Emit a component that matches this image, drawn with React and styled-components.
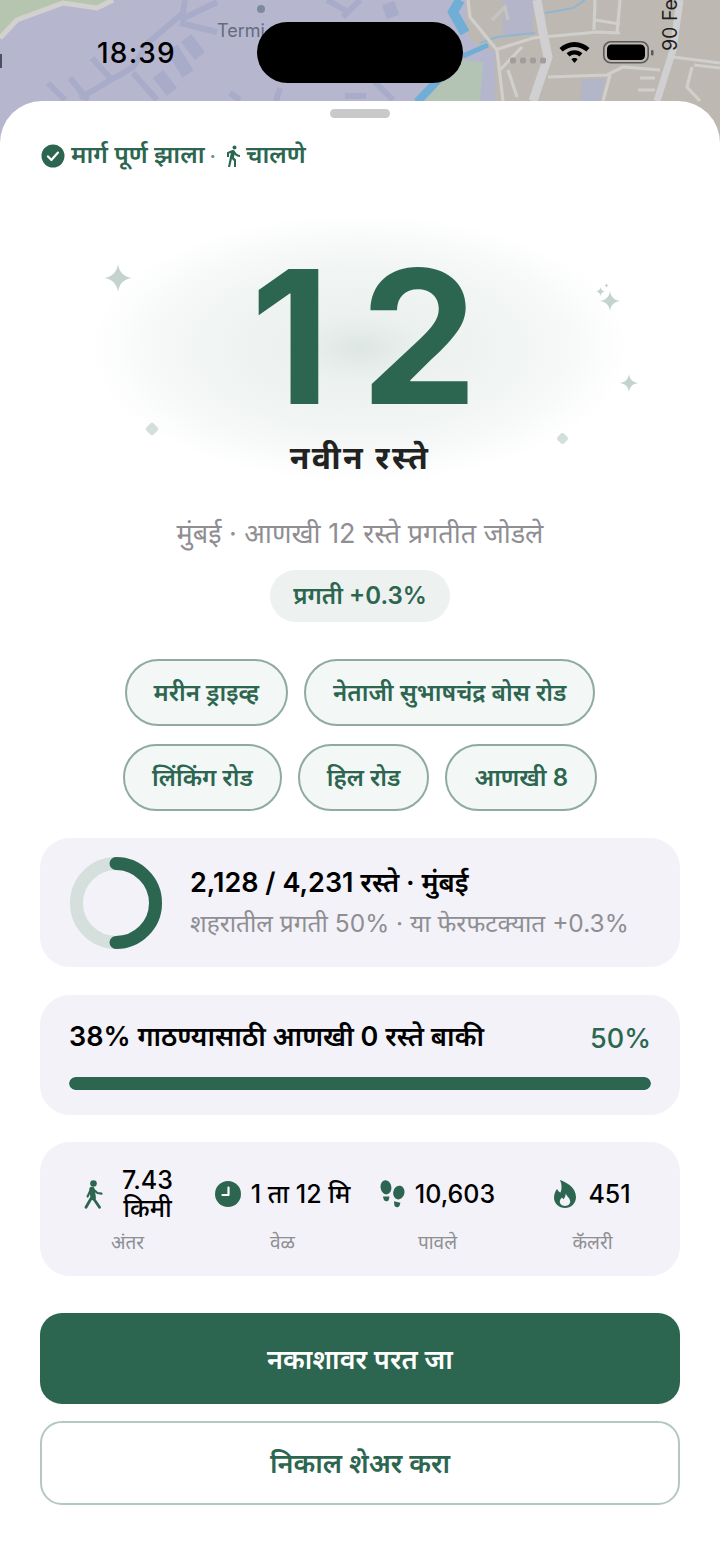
import React from 'react';
import styled, { createGlobalStyle } from 'styled-components';
import { MdDirectionsWalk } from 'react-icons/md';

const GREEN = '#2d6650';

const GlobalStyle = createGlobalStyle`
  html, body {
    margin: 0;
    padding: 0;
    background: #fff;
  }
  body {
    font-family: Inter, "Noto Sans Devanagari", "Noto Sans", "Liberation Sans", sans-serif;
  }
  * { box-sizing: border-box; }
`;

const Page = styled.div`
  position: relative;
  width: 720px;
  height: 1564px;
  overflow: hidden;
  background: #fff;
`;

const MapLayer = styled.svg`
  position: absolute;
  top: 0;
  left: 0;
  width: 720px;
  height: 170px;
`;

const StatusBar = styled.div`
  position: relative;
  height: 101px;
`;

const Time = styled.div`
  position: absolute;
  left: 97px;
  top: 37px;
  font-size: 28px;
  line-height: 33px;
  font-weight: 500;
  color: #000;
  letter-spacing: 1.2px;
`;

const Island = styled.div`
  position: absolute;
  left: 257px;
  top: 22px;
  width: 206px;
  height: 61px;
  border-radius: 31px;
  background: #000;
`;

const StatusIcons = styled.svg`
  position: absolute;
  left: 505px;
  top: 36px;
  width: 155px;
  height: 34px;
`;

const Sheet = styled.div`
  position: relative;
  height: 1463px;
  padding: 0 40px;
  background: #fff;
  border-radius: 42px 42px 0 0;
`;

const Handle = styled.div`
  width: 60px;
  height: 9px;
  margin: 0 auto;
  position: relative;
  top: 8px;
  border-radius: 5px;
  background: #c9c9c9;
`;

const RouteStatus = styled.div`
  display: flex;
  align-items: center;
  height: 34px;
  margin: 29px 0 0 1px;
  color: ${GREEN};
  font-size: 24.5px;
  font-weight: 600;
  white-space: nowrap;
`;

const Dot = styled.span`
  margin: 0 5px;
  color: #6d9485;
  font-size: 20px;
`;

const Hero = styled.div`
  position: relative;
  height: 323px;
  margin-top: 21px;
  display: flex;
  flex-direction: column;
  align-items: center;
`;

const Glow = styled.div`
  position: absolute;
  left: 50px;
  top: 19px;
  width: 540px;
  height: 270px;
  background: radial-gradient(ellipse closest-side, rgba(45, 102, 80, 0.16) 0%, rgba(45, 102, 80, 0.09) 25%, rgba(45, 102, 80, 0.065) 58%, rgba(45, 102, 80, 0.03) 82%, rgba(45, 102, 80, 0) 100%);
`;

const BigNumber = styled.div`
  position: relative;
  margin: 58px 0 0 38px;
  font-size: 186px;
  line-height: 170px;
  font-weight: 700;
  letter-spacing: 30px;
  color: ${GREEN};
`;

const HeroTitle = styled.div`
  position: relative;
  margin-top: 14px;
  font-size: 32px;
  line-height: 44px;
  font-weight: 700;
  letter-spacing: 2.5px;
  color: #222;
`;

const Spark = styled.svg`
  position: absolute;
  left: ${(props) => props.$x}px;
  top: ${(props) => props.$y}px;
  width: ${(props) => props.$size}px;
  height: ${(props) => props.$size}px;
  fill: #c4d3cd;
`;

const Gem = styled.div`
  position: absolute;
  left: ${(props) => props.$x}px;
  top: ${(props) => props.$y}px;
  width: ${(props) => props.$size}px;
  height: ${(props) => props.$size}px;
  border-radius: 2px;
  background: #d3dfda;
  transform: rotate(45deg);
`;

const Subtitle = styled.div`
  text-align: center;
  font-size: 27px;
  line-height: 34px;
  color: #8e8e93;
  white-space: nowrap;
`;

const PillRow = styled.div`
  display: flex;
  justify-content: center;
  margin-top: 19px;
`;

const Pill = styled.div`
  height: 52px;
  width: 180px;
  padding-top: 3px;
  display: flex;
  align-items: center;
  justify-content: center;
  border-radius: 26px;
  background: #edf1ef;
  color: ${GREEN};
  font-size: 24px;
  font-weight: 600;
`;

const Chips = styled.div`
  display: flex;
  flex-wrap: wrap;
  justify-content: center;
  gap: 18px 16px;
  margin-top: 37px;
`;

const Chip = styled.div`
  height: 67px;
  padding: 3px 27px 0;
  display: flex;
  align-items: center;
  border: 2px solid #8fab9f;
  border-radius: 34px;
  background: #f3f7f5;
  color: ${GREEN};
  font-size: 24px;
  font-weight: 600;
  white-space: nowrap;
`;

const Card = styled.div`
  border-radius: 30px;
  background: #f2f2f8;
`;

const CityCard = styled(Card)`
  height: 129px;
  margin-top: 27px;
  padding: 0 30px;
  display: flex;
  align-items: center;
  gap: 28px;
`;

const Ring = styled.svg`
  width: 92px;
  height: 92px;
  flex: none;
`;

const CityText = styled.div`
  display: flex;
  flex-direction: column;
  gap: 5px;
`;

const CityTitle = styled.div`
  font-size: 27px;
  line-height: 36px;
  font-weight: 600;
  color: #000;
  white-space: nowrap;
`;

const CitySub = styled.div`
  font-size: 24.5px;
  line-height: 34px;
  color: #8e8e93;
  white-space: nowrap;
`;

const GoalCard = styled(Card)`
  height: 120px;
  margin-top: 28px;
  padding: 25px 29px 0;
`;

const GoalRow = styled.div`
  display: flex;
  justify-content: space-between;
  align-items: center;
  height: 36px;
`;

const GoalText = styled.div`
  font-size: 27px;
  font-weight: 600;
  color: #000;
  white-space: nowrap;
`;

const GoalPercent = styled.div`
  font-size: 27px;
  font-weight: 500;
  color: ${GREEN};
`;

const Track = styled.div`
  height: 13px;
  margin-top: 21px;
  border-radius: 7px;
  background: #d5dfdc;
  overflow: hidden;
`;

const Fill = styled.div`
  height: 100%;
  border-radius: 7px;
  background: ${GREEN};
`;

const StatsCard = styled(Card)`
  height: 134px;
  margin-top: 27px;
  padding: 0 10px;
  display: grid;
  grid-template-columns: 155px 155px 155px 155px;
`;

const Stat = styled.div`
  display: flex;
  flex-direction: column;
  align-items: center;
`;

const StatValue = styled.div`
  height: 84px;
  padding: 20px 0 0 ${(props) => props.$indent || 0}px;
  display: flex;
  align-items: center;
  gap: ${(props) => props.$gap || 10}px;
  color: ${GREEN};
`;

const StatNumber = styled.div`
  max-width: ${(props) => (props.$wrap ? '60px' : 'none')};
  font-size: 25px;
  line-height: 28px;
  font-weight: 500;
  color: #000;
  text-align: center;
  white-space: ${(props) => (props.$wrap ? 'normal' : 'nowrap')};
`;

const StatLabel = styled.div`
  margin-top: 3px;
  font-size: 19px;
  line-height: 28px;
  color: #8e8e93;
`;

const PrimaryButton = styled.div`
  height: 91px;
  margin-top: 37px;
  padding-top: 5px;
  display: flex;
  align-items: center;
  justify-content: center;
  border-radius: 22px;
  background: ${GREEN};
  color: #fff;
  font-size: 27px;
  font-weight: 600;
`;

const SecondaryButton = styled.div`
  height: 84px;
  margin-top: 17px;
  padding-top: 5px;
  display: flex;
  align-items: center;
  justify-content: center;
  border: 2px solid #b4c8c1;
  border-radius: 22px;
  background: #fff;
  color: ${GREEN};
  font-size: 27px;
  font-weight: 600;
`;

const SPARK = 'M12 0C13 7 17 11 24 12C17 13 13 17 12 24C11 17 7 13 0 12C7 11 11 7 12 0Z';

const CheckBadge = () => (
  <svg width="24" height="24" viewBox="0 0 24 24" style={{ marginRight: 6, flex: 'none' }}>
    <circle cx="12" cy="12" r="11.5" fill={GREEN} />
    <path d="M7 12.4l3.4 3.6L17 8.6" fill="none" stroke="#fff" strokeWidth="2.2" strokeLinecap="round" strokeLinejoin="round" />
  </svg>
);

const WalkIcon = () => (
  <svg width="20" height="29" viewBox="0 0 20 29" fill="none" stroke={GREEN} strokeLinecap="round">
    <circle cx="9.5" cy="3.5" r="3.3" fill={GREEN} stroke="none" />
    <path d="M8 9.5L9.2 17.5" strokeWidth="5.4" />
    <path d="M9.5 18.5L15.5 27.3M7 18.5L2 27.3" strokeWidth="2.8" />
    <path d="M10 10L13.5 13L17.5 13.6M6.4 10.5L3.6 16.5" strokeWidth="2.2" strokeLinejoin="round" />
  </svg>
);

const ClockIcon = () => (
  <svg width="26" height="26" viewBox="0 0 26 26">
    <circle cx="13" cy="13" r="13" fill={GREEN} />
    <path d="M13.5 6.5v7.5H7.5" fill="none" stroke="#fff" strokeWidth="2.2" strokeLinecap="round" strokeLinejoin="round" />
  </svg>
);

const StepsIcon = () => (
  <svg width="25" height="29" viewBox="0 0 26 30" fill={GREEN}>
    <ellipse cx="6.2" cy="7.5" rx="5.6" ry="7.4" transform="rotate(-8 6.2 7.5)" />
    <path d="M3 17h6.8l-.4 2.6c-.3 1.6-1.2 2.4-2.8 2.4s-2.7-1-2.9-2.5z" />
    <ellipse cx="19.6" cy="13" rx="5.8" ry="7.2" transform="rotate(14 19.6 13)" />
    <path d="M14.6 22l6.6 1.5-.7 2.7c-.4 1.5-1.7 2.3-3.2 2s-2.6-1.6-2.5-3.1z" />
  </svg>
);

const FlameIcon = () => (
  <svg width="22" height="28" viewBox="0 0 22 28">
    <path d="M6 0C11 1.5 22 7 22 17C22 23.5 17 28 11 28C5 28 0 23.5 0 17.5C0 13 2 10.5 3 9C4 11 5 12 6.5 12.5C8 9 8 4 6 0Z" fill={GREEN} />
    <path d="M11.8 13.5C12.6 16.5 16.2 18 16.2 21.6C16.2 24.3 14 26 11 26C8 26 5.8 24.2 5.8 21.6C5.8 19.6 7 18.4 8 17.4C8.6 18.4 9.2 18.8 9.8 19C10.8 17.6 11.6 15.6 11.8 13.5Z" fill="#f2f2f8" />
  </svg>
);

const MapArt = () => (
  <MapLayer viewBox="0 0 720 170">
    <rect width="720" height="170" fill="#b6b7cf" />
    <path d="M0 0H113L97 8L63 3L17 20L0 37Z" fill="#b6c5af" />
    <path d="M0 38L17 20L63 3L97 8L113 0" fill="none" stroke="#d2d1cd" strokeWidth="5" />
    <rect x="0" y="54" width="2" height="14" fill="#4a5160" />
    <g stroke="#a9acc8" fill="none">
      <g strokeWidth="6">
        <path d="M185 0L183 13L148 43L133 67L80 98M217 2L180 20M180 23L217 32" />
        <path d="M48 83L65 100M70 78L88 100M92 58L110 78M133 73L157 100M230 93L240 100" />
        <path d="M280 88L276 101M373 80L393 100M345 96H366M327 0L350 13M360 0L343 17" />
      </g>
      <g strokeWidth="13">
        <path d="M186 38L200 56M172 48L188 74M158 74L172 92" />
        <path d="M388 3L393 17" />
      </g>
    </g>
    <circle cx="261" cy="9" r="4" fill="#7b8a9e" />
    <text x="217" y="37" fontFamily="Inter, sans-serif" fontSize="18" fill="#656b7f">Termi</text>

    <path d="M466 0H720V170H480V50L466 32Z" fill="#bdb9b2" />
    <path d="M503 0H533V33L503 37Z" fill="#b4b5c8" />
    <path d="M480 50L495 50V101H480Z" fill="#b3b6cc" />
    <path d="M582 79H605L600 101H580Z" fill="#b2b6c8" />
    <path d="M460 60L483 62L480 104H423L440 83Z" fill="#b3c3b4" />

    <path d="M460 0L453 12L465 33" fill="none" stroke="#70aed6" strokeWidth="10" />
    <path d="M463 56L488 45" fill="none" stroke="#70aed6" strokeWidth="5" />
    <path d="M456 62L440 78L417 102" fill="none" stroke="#70aed6" strokeWidth="8" />
    <path d="M480 43L497 37L535 33M545 13L573 8L585 0" fill="none" stroke="#8fb5d2" strokeWidth="2" />

    <g stroke="#d0cfcb" strokeWidth="3.2" fill="none">
      <path d="M468 0L470 17L497 50L503 101M495 50L533 38L597 32L620 33" />
      <path d="M595 0L594 30M620 0L617 33M595 20L620 24" />
      <path d="M500 70L522 47M508 70L517 97M548 77L607 75L623 67L660 70M610 75L603 101" />
      <path d="M673 57L720 63M692 67L687 87L700 101M694 65L720 68" />
      <path d="M640 78H655M638 90H655" />
      <path d="M492 20L505 7L508 20" stroke="#c6c4c0" />
    </g>
    <path d="M537 0L543 33L548 57L533 101" fill="none" stroke="#d0d0d2" strokeWidth="9" />
    <path d="M680 0L673 50L657 101" fill="none" stroke="#d0d0d2" strokeWidth="7" />
    <text transform="translate(677 51) rotate(-90)" fontFamily="Inter, sans-serif" fontSize="19.5" fill="#1f1f1f">90 Fee</text>
  </MapLayer>
);

const App = () => {
  return (
    <Page>
      <GlobalStyle />
      <MapArt />
      <StatusBar>
        <Time>18:39</Time>
        <Island />
        <StatusIcons viewBox="0 0 155 34">
          <g fill="#a09e9c">
            <rect x="5" y="21.5" width="6" height="6" rx="2" />
            <rect x="15" y="21.5" width="6" height="6" rx="2" />
            <rect x="25" y="21.5" width="6" height="6" rx="2" />
            <rect x="35" y="21.5" width="6" height="6" rx="2" />
          </g>
          <g transform="translate(0 -3)">
            <path d="M69.5 9C63.5 9 58.6 11.4 54.5 15L57.6 18.6C60.8 15.7 65 13.9 69.5 13.9S78.2 15.7 81.4 18.6L84.5 15C80.4 11.4 75.5 9 69.5 9ZM69.5 17.2C66.5 17.2 63.8 18.3 61.6 20.3L64.5 23.6C65.9 22.4 67.6 21.6 69.5 21.6S73.1 22.4 74.5 23.6L77.4 20.3C75.2 18.3 72.5 17.2 69.5 17.2ZM69.5 25C68.3 25 67.2 25.5 66.4 26.2L69.5 30L72.6 26.2C71.8 25.5 70.7 25 69.5 25Z" fill="#000" />
          </g>
          <rect x="98.8" y="5.8" width="44.4" height="21" rx="7" fill="none" stroke="#5c5a58" strokeWidth="1.6" />
          <rect x="102" y="8.5" width="38" height="15.5" rx="4.5" fill="#000" />
          <rect x="146" y="14" width="2.5" height="5.5" rx="1.2" fill="#5c5a58" />
        </StatusIcons>
      </StatusBar>
      <Sheet>
        <Handle />
        <RouteStatus>
          <CheckBadge />
          मार्ग पूर्ण झाला
          <Dot>·</Dot>
          <MdDirectionsWalk size={24} style={{ marginRight: 1 }} />
          चालणे
        </RouteStatus>
        <Hero>
          <Glow />
          <Spark $x={64} $y={70} $size={28} viewBox="0 0 24 24"><path d={SPARK} /></Spark>
          <Spark $x={560} $y={97} $size={20} viewBox="0 0 24 24"><path d={SPARK} /></Spark>
          <Spark $x={556} $y={93} $size={9} viewBox="0 0 24 24"><path d={SPARK} /></Spark>
          <Spark $x={564} $y={89} $size={5} viewBox="0 0 24 24"><path d={SPARK} /></Spark>
          <Spark $x={580} $y={180} $size={18} viewBox="0 0 24 24"><path d={SPARK} /></Spark>
          <Gem $x={107} $y={230} $size={10} />
          <Gem $x={518} $y={240} $size={9} />
          <BigNumber>12</BigNumber>
          <HeroTitle>नवीन रस्ते</HeroTitle>
        </Hero>
        <Subtitle>मुंबई · आणखी 12 रस्ते प्रगतीत जोडले</Subtitle>
        <PillRow>
          <Pill>प्रगती +0.3%</Pill>
        </PillRow>
        <Chips>
          <Chip>मरीन ड्राइव्ह</Chip>
          <Chip>नेताजी सुभाषचंद्र बोस रोड</Chip>
          <Chip>लिंकिंग रोड</Chip>
          <Chip>हिल रोड</Chip>
          <Chip>आणखी 8</Chip>
        </Chips>
        <CityCard>
          <Ring viewBox="0 0 92 92">
            <circle cx="46" cy="46" r="39.5" fill="none" stroke="#d5dfdc" strokeWidth="13" />
            <path d="M46 6.5A39.5 39.5 0 0 1 46 85.5" fill="none" stroke={GREEN} strokeWidth="13" strokeLinecap="round" />
          </Ring>
          <CityText>
            <CityTitle>2,128 / 4,231 रस्ते · मुंबई</CityTitle>
            <CitySub>शहरातील प्रगती 50% · या फेरफटक्यात +0.3%</CitySub>
          </CityText>
        </CityCard>
        <GoalCard>
          <GoalRow>
            <GoalText>38% गाठण्यासाठी आणखी 0 रस्ते बाकी</GoalText>
            <GoalPercent>50%</GoalPercent>
          </GoalRow>
          <Track>
            <Fill style={{ width: '100%' }} />
          </Track>
        </GoalCard>
        <StatsCard>
          <Stat>
            <StatValue $gap={14} $indent={6}>
              <WalkIcon />
              <StatNumber $wrap>7.43 किमी</StatNumber>
            </StatValue>
            <StatLabel>अंतर</StatLabel>
          </Stat>
          <Stat>
            <StatValue>
              <ClockIcon />
              <StatNumber>1 ता 12 मि</StatNumber>
            </StatValue>
            <StatLabel>वेळ</StatLabel>
          </Stat>
          <Stat>
            <StatValue>
              <StepsIcon />
              <StatNumber>10,603</StatNumber>
            </StatValue>
            <StatLabel>पावले</StatLabel>
          </Stat>
          <Stat>
            <StatValue $gap={12}>
              <FlameIcon />
              <StatNumber>451</StatNumber>
            </StatValue>
            <StatLabel>कॅलरी</StatLabel>
          </Stat>
        </StatsCard>
        <PrimaryButton>नकाशावर परत जा</PrimaryButton>
        <SecondaryButton>निकाल शेअर करा</SecondaryButton>
      </Sheet>
    </Page>
  );
};

export default App;
